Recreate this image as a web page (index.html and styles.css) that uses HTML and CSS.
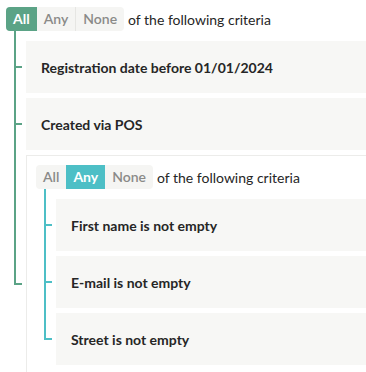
FILE: index.html
```html
<!DOCTYPE html>
<html>
<head>
    <title>Segment Criteria</title>
    <link rel="stylesheet" href="styles.css">
</head>
<body>
    <div class="rule-tree">
        <div class="group green">
            <div class="group-head">
                <div class="seg">
                    <span class="seg-btn active">All</span>
                    <span class="seg-btn">Any</span>
                    <span class="seg-btn sep">None</span>
                </div>
                <span class="criteria">of the following criteria</span>
            </div>
            <ul class="children">
                <li class="child"><div class="card">Registration date before 01/01/2024</div></li>
                <li class="child"><div class="card">Created via POS</div></li>
                <li class="child child-group">
                    <div class="group teal nested">
                        <div class="group-head">
                            <div class="seg">
                                <span class="seg-btn">All</span>
                                <span class="seg-btn active">Any</span>
                                <span class="seg-btn">None</span>
                            </div>
                            <span class="criteria">of the following criteria</span>
                        </div>
                        <ul class="children">
                            <li class="child"><div class="card">First name is not empty</div></li>
                            <li class="child"><div class="card">E-mail is not empty</div></li>
                            <li class="child"><div class="card">Street is not empty</div></li>
                        </ul>
                    </div>
                </li>
            </ul>
        </div>
    </div>
</body>
</html>
```

FILE: styles.css
```css
html, body { overflow: hidden; }
body { margin: 7px 0 0 6px; font-family: Lato, "Liberation Sans", sans-serif; color: #262626; background: #fff; }
.rule-tree { width: 440px; }

.group { --line: #5ba386; }
.group.teal { --line: #4dbfc6; }

.group-head { display: flex; align-items: center; height: 24px; }
.seg { display: flex; height: 24px; background: #f5f5f3; border-radius: 4px; }
.seg-btn { padding: 0 7px; line-height: 24px; font-size: 14px; font-weight: 600; color: #8a8a88; }
.seg-btn:first-child { border-radius: 4px 0 0 4px; }
.seg-btn.sep { border-left: 1px solid #e6e6e3; }
.seg-btn.active { background: var(--line); color: #fff; font-weight: 700; }
.criteria { margin-left: 4px; font-size: 14px; color: #262626; }

.children { list-style: none; margin: 0; padding: 10px 0 0 20px; }
.child { position: relative; margin-bottom: 5px; }
.child::before { content: ""; position: absolute; left: -12px; top: -5px; bottom: 0; border-left: 2px solid var(--line); }
.child:first-child::before { top: -10px; }
.child::after { content: ""; position: absolute; left: -12px; top: 50%; width: 8px; height: 2px; margin-top: -1px; background: var(--line); }
.child:last-child::before { bottom: auto; height: calc(50% + 4px); width: 6px; border-bottom: 2px solid var(--line); }
.child:last-child::after { display: none; }
.child-group::before, .child-group:last-child::before { height: 133px; }

.card { display: flex; align-items: center; height: 52px; padding-left: 15px; background: #f7f7f5; font-size: 14px; font-weight: 700; color: #262626; }

.nested { border: 1px solid #ececea; padding: 9px 0 46px 9px; }
.nested .children { padding-top: 10px; }
```
